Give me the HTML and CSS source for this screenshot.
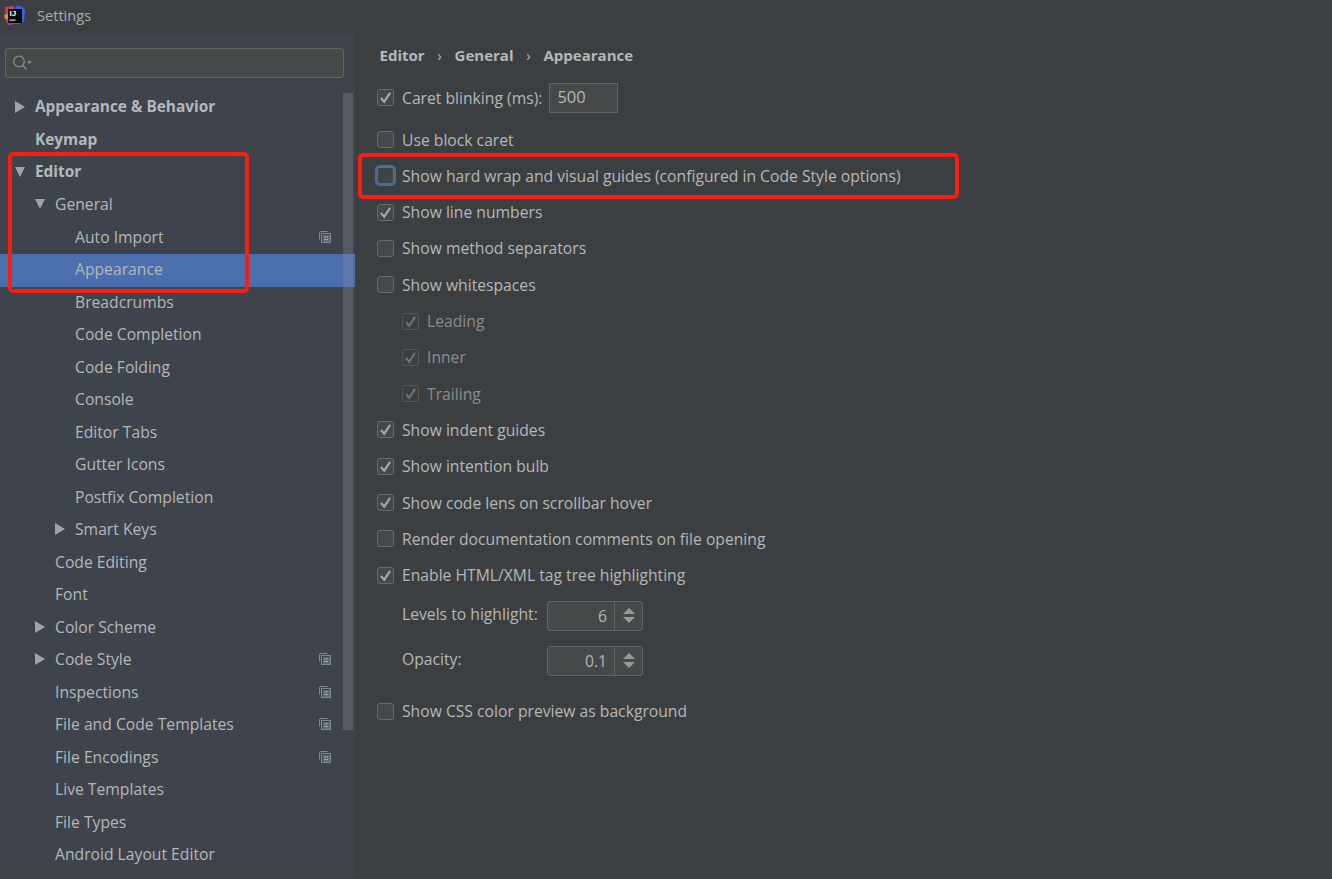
FILE: index.html
```html
<!DOCTYPE html>
<html lang="en">

<head>
  <meta charset="UTF-8">
  <meta name="viewport" content="width=device-width, initial-scale=1.0">
  <title>Settings</title>
  <link rel="stylesheet" href="styles.css">
</head>

<body>
  <svg width="0" height="0" class="defs">
    <symbol id="copy" viewBox="0 0 12 12">
      <path d="M0.5 8.5V2Q0.5 0.5 2 0.5H8.5" fill="none" stroke="#7f8b91" />
      <rect x="2.5" y="2.5" width="9" height="9" fill="none" stroke="#7f8b91" />
      <rect x="4" y="4" width="7" height="7" fill="#5f6a70" />
      <path d="M5 6H9M5 8.5H9" stroke="#9aa7b0" />
    </symbol>
    <symbol id="check" viewBox="0 0 18 18">
      <path d="M3.5 9.5L7.5 14L14.5 3.5" fill="none" stroke="currentColor" stroke-width="2.6" />
    </symbol>
  </svg>

  <header class="titlebar">
    <svg class="logo" width="21" height="21" viewBox="0 0 21 21">
      <path d="M1 2L10 1L9 18L2 17Z" fill="#e0336f" />
      <path d="M12 1L17 1L21 5L20 17L14 19L8 19Z" fill="#3f5fe0" />
      <path d="M0 10L4 9L4 14L1 14Z" fill="#f08c2e" />
      <path d="M3 17L8 16L8 20L4 20Z" fill="#9c36b5" />
      <rect x="4" y="4" width="14" height="14" fill="#0a0a0a" />
      <text x="5.5" y="11" class="logo-text">IJ</text>
      <rect x="5.5" y="14.5" width="6" height="1.3" fill="#cccccc" />
    </svg>
    <span class="window-title">Settings</span>
  </header>

  <div class="window">
    <aside class="sidebar">
      <div class="search">
        <svg width="20" height="16" viewBox="0 0 20 16">
          <circle cx="6" cy="6.5" r="5.3" fill="none" stroke="#868a8c" stroke-width="1.2" />
          <path d="M9.7 10.5L13.5 14.5" stroke="#868a8c" stroke-width="1.4" />
          <path d="M14 6H19L16.5 9Z" fill="#868a8c" />
        </svg>
      </div>

      <div class="scrollbar"></div>

      <ul class="tree">
        <li class="row bold l0"><i class="arrow right"></i>Appearance &amp; Behavior</li>
        <li class="row bold l0">Keymap</li>
        <li class="row bold l0"><i class="arrow down"></i>Editor</li>
        <li class="row l1"><i class="arrow down"></i>General</li>
        <li class="row l2">Auto Import<svg class="copy"><use href="#copy" /></svg></li>
        <li class="row l2 selected">Appearance</li>
        <li class="row l2">Breadcrumbs</li>
        <li class="row l2">Code Completion</li>
        <li class="row l2">Code Folding</li>
        <li class="row l2">Console</li>
        <li class="row l2">Editor Tabs</li>
        <li class="row l2">Gutter Icons</li>
        <li class="row l2">Postfix Completion</li>
        <li class="row l2"><i class="arrow right"></i>Smart Keys</li>
        <li class="row l1">Code Editing</li>
        <li class="row l1">Font</li>
        <li class="row l1"><i class="arrow right"></i>Color Scheme</li>
        <li class="row l1"><i class="arrow right"></i>Code Style<svg class="copy"><use href="#copy" /></svg></li>
        <li class="row l1">Inspections<svg class="copy"><use href="#copy" /></svg></li>
        <li class="row l1">File and Code Templates<svg class="copy"><use href="#copy" /></svg></li>
        <li class="row l1">File Encodings<svg class="copy"><use href="#copy" /></svg></li>
        <li class="row l1">Live Templates</li>
        <li class="row l1">File Types</li>
        <li class="row l1">Android Layout Editor</li>
      </ul>
    </aside>

    <main class="content">
      <nav class="breadcrumb">
        <span>Editor</span><em>›</em><span>General</span><em>›</em><span>Appearance</span>
      </nav>

      <div class="option first">
        <span class="box on"><svg><use href="#check" /></svg></span>Caret blinking (ms):
        <span class="text-input">500</span>
      </div>
      <div class="option gap-top"><span class="box"></span>Use block caret</div>
      <div class="option"><span class="box focused"></span>Show hard wrap and visual guides (configured in Code Style options)</div>
      <div class="option"><span class="box on"><svg><use href="#check" /></svg></span>Show line numbers</div>
      <div class="option"><span class="box"></span>Show method separators</div>
      <div class="option"><span class="box"></span>Show whitespaces</div>
      <div class="option sub"><span class="box off"><svg><use href="#check" /></svg></span>Leading</div>
      <div class="option sub"><span class="box off"><svg><use href="#check" /></svg></span>Inner</div>
      <div class="option sub"><span class="box off"><svg><use href="#check" /></svg></span>Trailing</div>
      <div class="option"><span class="box on"><svg><use href="#check" /></svg></span>Show indent guides</div>
      <div class="option"><span class="box on"><svg><use href="#check" /></svg></span>Show intention bulb</div>
      <div class="option"><span class="box on"><svg><use href="#check" /></svg></span>Show code lens on scrollbar hover</div>
      <div class="option"><span class="box"></span>Render documentation comments on file opening</div>
      <div class="option"><span class="box on"><svg><use href="#check" /></svg></span>Enable HTML/XML tag tree highlighting</div>

      <div class="field">
        <label>Levels to highlight:</label>
        <div class="spinner">
          <span class="value">6</span>
          <span class="steps"><i class="up"></i><i class="dn"></i></span>
        </div>
      </div>
      <div class="field">
        <label>Opacity:</label>
        <div class="spinner">
          <span class="value">0.1</span>
          <span class="steps"><i class="up"></i><i class="dn"></i></span>
        </div>
      </div>

      <div class="option last"><span class="box"></span>Show CSS color preview as background</div>
    </main>
  </div>

  <!-- red annotations drawn over the screenshot -->
  <div class="mark mark-tree"></div>
  <div class="mark mark-option"></div>
</body>

</html>
```

FILE: styles.css
```css
/* IDE settings dialog, dark theme */
* {
  box-sizing: border-box;
}

html,
body {
  height: 100%;
}

body {
  position: relative;
  margin: 0;
  overflow: hidden;
  background-color: #3c3f41;
  color: #b5b8ba;
  font-family: 'Open Sans', 'Noto Sans', Arial, sans-serif;
  font-size: 15.7px;
}

.defs {
  position: absolute;
}

.titlebar {
  display: flex;
  align-items: center;
  height: 33px;
  padding: 0 0 3px 4px;
  background-color: #3c3f41;
}

.logo-text {
  font-family: 'Liberation Sans', Arial, sans-serif;
  font-size: 8px;
  font-weight: bold;
  fill: #ffffff;
}

.window-title {
  margin-left: 12px;
  color: #a9adb0;
  font-size: 14.6px;
}

.window {
  display: flex;
  height: 846px;
}

.sidebar {
  position: relative;
  flex: 0 0 355px;
  padding-top: 15px;
  background-color: #3e434c;
  overflow: hidden;
}

.search {
  display: flex;
  align-items: center;
  width: 339px;
  height: 30px;
  margin-left: 5px;
  padding-left: 7px;
  background-color: #45494a;
  border: 1px solid #646464;
  border-radius: 3px;
}

.scrollbar {
  position: absolute;
  top: 60px;
  left: 343px;
  z-index: 2;
  width: 10px;
  height: 637px;
  background-color: rgba(140, 145, 160, 0.3);
}

.tree {
  isolation: isolate;
  list-style: none;
  margin: 12.5px 0 0;
  padding: 0;
}

.row {
  position: relative;
  display: flex;
  align-items: center;
  height: 32.5px;
  white-space: nowrap;
}

.bold {
  font-size: 15.4px;
  font-weight: 700;
  color: #b4b8bb;
}

.l0 {
  padding-left: 35px;
}

.l1 {
  padding-left: 55px;
}

.l2 {
  padding-left: 75px;
}

.selected::before {
  content: "";
  position: absolute;
  z-index: -1;
  top: 0.5px;
  left: 0;
  right: 0;
  height: 33px;
  background-color: #4b6eaf;
}

.arrow {
  position: absolute;
  width: 0;
  height: 0;
}

.l0 .arrow {
  left: 15px;
}

.l1 .arrow {
  left: 35px;
}

.l2 .arrow {
  left: 55px;
}

.arrow.right {
  border-top: 6px solid transparent;
  border-bottom: 6px solid transparent;
  border-left: 10px solid #a0a4a6;
}

.arrow.down {
  border-left: 5.5px solid transparent;
  border-right: 5.5px solid transparent;
  border-top: 10px solid #a0a4a6;
}

.copy {
  position: absolute;
  left: 319px;
  width: 12px;
  height: 12px;
}

.content {
  flex: 1;
  padding-left: 22px;
}

.breadcrumb {
  display: flex;
  align-items: center;
  height: 44px;
  margin-left: 2.5px;
  font-size: 15px;
  font-weight: 700;
  color: #b4b8bb;
}

.breadcrumb em {
  width: 30px;
  font-style: normal;
  font-weight: 400;
  text-align: center;
}

.option {
  display: flex;
  align-items: center;
  height: 36.3px;
  white-space: nowrap;
}

.option.first {
  margin-top: 2.6px;
}

.option.gap-top {
  margin-top: 5.5px;
}

.option.sub {
  padding-left: 25px;
  color: #8a8d8f;
}

.option.last {
  margin-top: 10px;
}

.box {
  flex: none;
  display: block;
  width: 17px;
  height: 17px;
  margin-right: 8px;
  background-color: #43494a;
  border: 1px solid #6b6b6b;
  border-radius: 3px;
  color: #a7a7a7;
}

.box svg {
  display: block;
  width: 15px;
  height: 15px;
}

.box.focused {
  background-color: #3f4345;
  border-color: #6b6b6b;
  box-shadow: 0 0 0 2px #466d94;
}

.box.off {
  background-color: #3c3f41;
  border-color: #53575a;
  color: #6f7173;
}

.text-input {
  width: 69px;
  height: 30px;
  margin-left: 7px;
  padding: 0 7px;
  font-size: 16.5px;
  line-height: 25px;
  background-color: #45494a;
  border: 1px solid #646464;
}

.field {
  display: flex;
  align-items: center;
  height: 45px;
  padding-left: 25px;
}

.field:first-of-type {
  margin-top: -1px;
}

.field label {
  width: 145px;
  padding-bottom: 3px;
}

.spinner {
  display: flex;
  width: 96px;
  height: 30px;
  background-color: #45494a;
  border: 1px solid #646464;
  border-radius: 3px;
}

.value {
  flex: 1;
  padding-right: 7px;
  line-height: 28px;
  text-align: right;
  border-right: 1px solid #646464;
}

.steps {
  display: flex;
  flex-direction: column;
  align-items: center;
  justify-content: center;
  gap: 3px;
  width: 27px;
}

.up {
  border-left: 6px solid transparent;
  border-right: 6px solid transparent;
  border-bottom: 6px solid #9a9a9a;
}

.dn {
  border-left: 6px solid transparent;
  border-right: 6px solid transparent;
  border-top: 6px solid #9a9a9a;
}

.mark {
  position: absolute;
  z-index: 5;
  border: 4px solid #fa1e12;
  border-radius: 5px;
}

.mark-tree {
  top: 152px;
  left: 8px;
  width: 241px;
  height: 141px;
}

.mark-option {
  top: 153px;
  left: 358px;
  width: 601px;
  height: 46px;
}
```
